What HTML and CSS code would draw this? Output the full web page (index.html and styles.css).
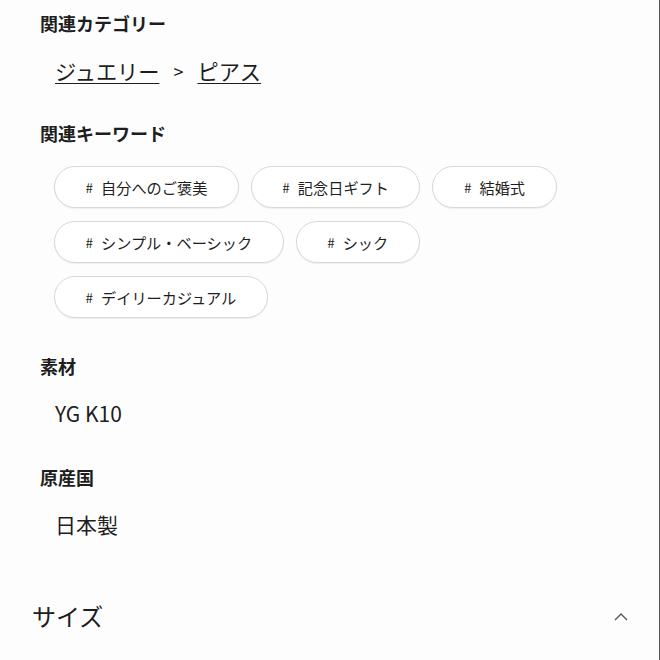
FILE: index.html
```html
<!DOCTYPE html>
<html lang="ja">
<head>
<meta charset="utf-8">
<link rel="stylesheet" href="styles.css">
</head>
<body>
<div class="page">
  <section class="info">
    <h3 class="label">関連カテゴリー</h3>
    <div class="crumbs">
      <a class="crumb" href="#">ジュエリー</a>
      <span class="sep">&gt;</span>
      <a class="crumb" href="#">ピアス</a>
    </div>

    <h3 class="label label-gap">関連キーワード</h3>
    <div class="tags">
      <a class="tag" href="#"><span class="hash">#</span>自分へのご褒美</a>
      <a class="tag" href="#"><span class="hash">#</span>記念日ギフト</a>
      <a class="tag" href="#"><span class="hash">#</span>結婚式</a>
      <a class="tag" href="#"><span class="hash">#</span>シンプル・ベーシック</a>
      <a class="tag" href="#"><span class="hash">#</span>シック</a>
      <a class="tag" href="#"><span class="hash">#</span>デイリーカジュアル</a>
    </div>

    <h3 class="label label-gap2">素材</h3>
    <p class="value">YG K10</p>

    <h3 class="label label-gap3">原産国</h3>
    <p class="value">日本製</p>
  </section>

  <div class="accordion">
    <span class="acc-title">サイズ</span>
    <svg class="chev" width="14" height="10" viewBox="0 0 14 10">
      <polyline points="1,8 7,2 13,8" fill="none" stroke="#555" stroke-width="1.3"/>
    </svg>
  </div>
</div>
</body>
</html>
```
FILE: styles.css
```css
html, body {
  margin: 0;
  padding: 0;
  background: #fdfdfd;
}
body {
  font-family: "Noto Sans CJK JP", "Noto Sans", sans-serif;
  color: #1e1e1e;
}
.page {
  width: 659px;
  height: 660px;
  border-right: 1px solid #555;
  overflow: hidden;
}
.info {
  padding: 10px 0 0 40px;
}
.label {
  margin: 0;
  font-size: 18px;
  line-height: 26px;
  font-weight: 700;
  color: #1e1e1e;
}
.label-gap { margin-top: 34px; }
.label-gap2 { margin-top: 35px; }
.label-gap3 { margin-top: 36px; }
.crumbs {
  margin-top: 20px;
  padding-left: 15px;
  display: flex;
  align-items: center;
  font-size: 21.2px;
  line-height: 30px;
}
.crumb {
  color: #1e1e1e;
  text-decoration: underline;
  text-decoration-thickness: 1px;
  text-underline-offset: 3px;
}
.sep {
  margin: 0 14px 0 14px;
  font-size: 18px;
}
.tags {
  margin-top: 20px;
  padding-left: 14px;
  width: 530px;
  display: flex;
  flex-wrap: wrap;
  gap: 13px 12px;
}
.tag {
  box-sizing: border-box;
  height: 42px;
  padding: 0 30.5px 0 30.5px;
  border: 1px solid #d8d8d8;
  border-radius: 21px;
  background: #fff;
  box-shadow: 0 1px 1px rgba(0,0,0,0.06);
  display: inline-flex;
  align-items: center;
  font-size: 15.2px;
  color: #1e1e1e;
  text-decoration: none;
}
.hash {
  font-size: 13.5px;
  margin-right: 8px;
}
.value {
  margin: 19px 0 0 15px;
  font-size: 21px;
  line-height: 30px;
}
.accordion {
  margin-top: 60px;
  padding: 0 31px 0 32px;
  height: 34px;
  display: flex;
  align-items: center;
  justify-content: space-between;
}
.acc-title {
  font-size: 24px;
  line-height: 34px;
  color: #1e1e1e;
}
.chev {
  margin-top: 1px;
}
```
